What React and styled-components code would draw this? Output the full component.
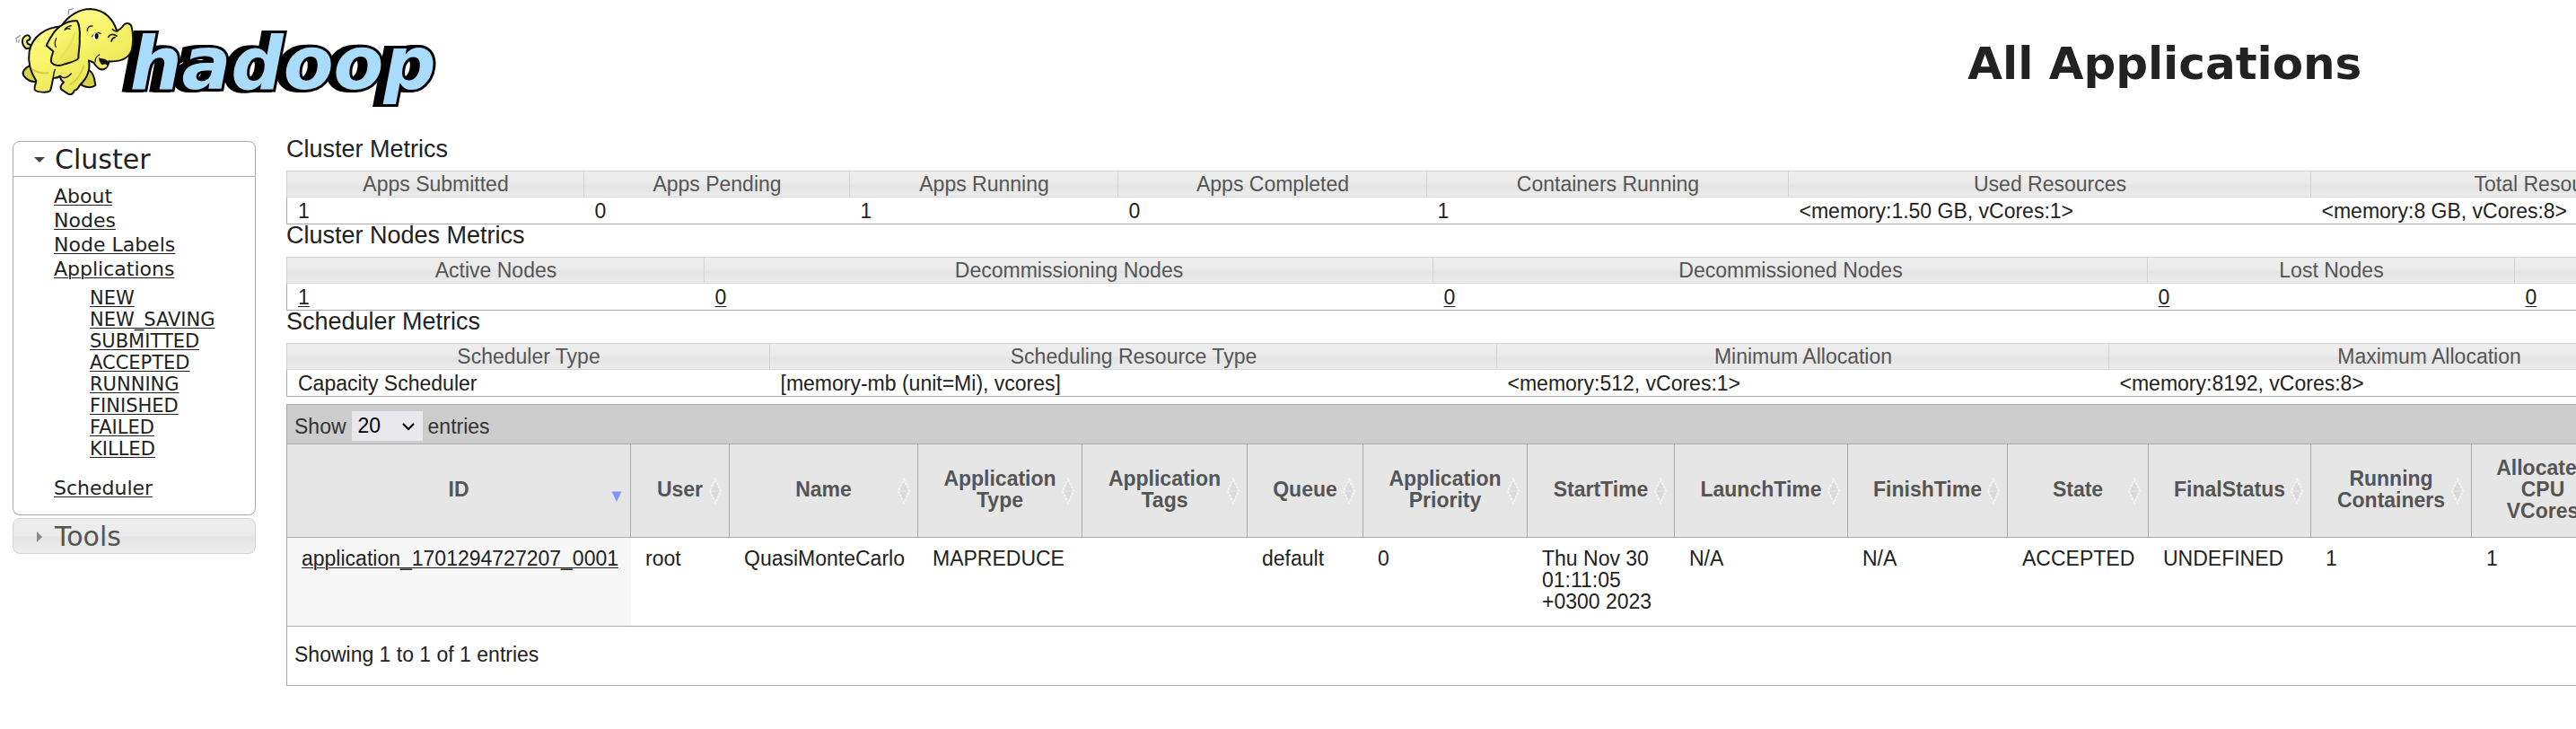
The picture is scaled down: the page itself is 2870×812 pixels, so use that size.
import React from "react";
import styled, { createGlobalStyle } from "styled-components";

const GlobalStyle = createGlobalStyle`
  *, *::before, *::after { box-sizing: border-box; }
  body {
    margin: 0;
    background: #fff;
    color: #222;
    font-family: "Liberation Sans", Arial, sans-serif;
    font-size: 23px;
    overflow-x: hidden;
  }
`;

const Page = styled.div`
  overflow: hidden;
`;

const Header = styled.header`
  display: flex;
  width: 151%;
  height: 154px;
`;

const Logo = styled.svg`
  flex: none;
  width: 490px;
  height: 120px;
`;

const Wordmark = styled.text`
  font: italic bold 244px "DejaVu Sans", sans-serif;
  fill: #a9dcfb;
  stroke: #000;
  stroke-width: 18px;
  stroke-linejoin: miter;
  paint-order: stroke;
  filter: drop-shadow(-12px 0 0 #000) drop-shadow(-12px 0 0 #000);
`;

const Title = styled.h1`
  flex: 1;
  margin: 42px 0 0;
  font: bold 50px/58px "DejaVu Sans", sans-serif;
  text-align: center;
`;

const Layout = styled.div`
  display: flex;
  align-items: flex-start;
  gap: 33px;
  padding-left: 14px;
`;

const Sidebar = styled.nav`
  flex: none;
  width: 271px;
  margin-right: 1px;
  padding-top: 3px;
  font-family: "DejaVu Sans", sans-serif;
`;

const SectionButton = styled.button`
  display: flex;
  align-items: center;
  gap: 10px;
  width: 100%;
  height: 40px;
  padding: 2px 0 0 22px;
  border: 1px solid ${(p) => (p.$open ? "#aaa" : "#d3d3d3")};
  border-radius: ${(p) => (p.$open ? "8px 8px 0 0" : "8px")};
  background: ${(p) =>
    p.$open ? "#fff" : "linear-gradient(#ededed, #ebebeb 50%, #e5e5e5 51%, #ececec)"};
  color: ${(p) => (p.$open ? "#222" : "#555")};
  font: 30px/36px "DejaVu Sans", sans-serif;
`;

const Arrow = styled.svg`
  flex: none;
  width: 14px;
  height: 14px;
`;

const Panel = styled.div`
  margin-bottom: 3px;
  padding: 8px 0 16px 45px;
  border: 1px solid #aaa;
  border-top: 0;
  border-radius: 0 0 8px 8px;
`;

const NavList = styled.ul`
  margin: 0;
  padding: 0;
  list-style: none;
  font-size: 22px;
  line-height: 27px;
`;

const SubList = styled.ul`
  margin: 0;
  padding: 7px 0 18px 40px;
  list-style: none;
  font-size: 21px;
  line-height: 24px;
`;

const TextLink = styled.a`
  color: #222;
  text-decoration: underline;
  text-decoration-thickness: 1px;
  text-underline-offset: 2px;
`;

const Main = styled.main`
  flex: 1;
  min-width: 0;
  overflow-x: clip;
`;

const Heading = styled.h2`
  margin: 0;
  padding-bottom: 11px;
  font-size: 27px;
  font-weight: normal;
  line-height: 25px;
`;

const Metrics = styled.table`
  width: ${(p) => p.$width}px;
  min-width: 100%;
  table-layout: fixed;
  border-collapse: collapse;
  border: 1px solid #aaa;
  th {
    height: 28px;
    padding: 1px 11px 0 12px;
    border: 1px solid #d3d3d3;
    background: linear-gradient(#ededed, #ebebeb 50%, #e4e4e4 51%, #ebebeb);
    color: #555;
    font-weight: normal;
    line-height: 27px;
  }
  td {
    height: 29px;
    padding: 1px 11px 0 12px;
    line-height: 28px;
  }
`;

const AppsPanel = styled.section`
  margin-top: 8px;
  border: solid #aaa;
  border-width: 1px 0 1px 1px;
`;

const Toolbar = styled.div`
  display: flex;
  align-items: center;
  height: 43px;
  padding: 0 8px;
  background: #ccc;
  color: #333;
`;

const LengthLabel = styled.label`
  display: flex;
  align-items: center;
  gap: 6px;
  padding-top: 6px;
`;

const SelectWrap = styled.span`
  display: grid;
  align-items: center;
  margin-bottom: 2px;
  > * { grid-area: 1 / 1; }
`;

const Select = styled.select`
  width: 79px;
  height: 33px;
  padding: 0 7px;
  border: 0;
  border-radius: 0;
  appearance: none;
  background: #e9e9ed;
  color: #000;
  font: 23px/33px "Liberation Sans", Arial, sans-serif;
`;

const Chevron = styled.svg`
  justify-self: end;
  width: 14px;
  height: 10px;
  margin-right: 9px;
  pointer-events: none;
`;

const Apps = styled.table`
  width: ${(p) => p.$width}px;
  min-width: 100%;
  table-layout: fixed;
  border-collapse: separate;
  border-spacing: 0;
  border: solid #aaa;
  border-width: 1px 0;
  line-height: 24px;
  th {
    padding: 0;
    border: solid #aaa;
    border-width: 0 1px 1px 0;
    background: #e6e6e6;
  }
  td {
    height: 98px;
    padding: 11px 8px 12px 16px;
    vertical-align: top;
  }
  td:first-child { background: #f7f7f7; }
`;

const SortButton = styled.button`
  display: grid;
  grid-template-columns: 16px 1fr 16px;
  align-items: center;
  width: 100%;
  height: 103px;
  padding: 0 7px;
  border: 0;
  background: none;
  color: #555;
  font: bold 23px/24px "Liberation Sans", Arial, sans-serif;
`;

const SortLabel = styled.span`
  grid-column: 2;
  padding-bottom: 4px;
`;

const SortIcon = styled.svg`
  width: 16px;
  height: 30px;
`;

const Info = styled.div`
  padding: 0 0 2px 8px;
  line-height: 63px;
`;

const sum = (cols) => cols.reduce((total, c) => total + c.width, 0);

const clusterMetrics = [
  { name: "Apps Submitted", value: "1", width: 331 },
  { name: "Apps Pending", value: "0", width: 296 },
  { name: "Apps Running", value: "1", width: 299 },
  { name: "Apps Completed", value: "0", width: 344 },
  { name: "Containers Running", value: "1", width: 403 },
  { name: "Used Resources", value: "<memory:1.50 GB, vCores:1>", width: 582 },
  { name: "Total Resources", value: "<memory:8 GB, vCores:8>", width: 528 },
];

const nodeMetrics = [
  { name: "Active Nodes", value: "1", width: 465, link: true },
  { name: "Decommissioning Nodes", value: "0", width: 812, link: true },
  { name: "Decommissioned Nodes", value: "0", width: 796, link: true },
  { name: "Lost Nodes", value: "0", width: 409, link: true },
  { name: "", value: "0", width: 500, link: true },
];

const schedulerMetrics = [
  { name: "Scheduler Type", value: "Capacity Scheduler", width: 538 },
  { name: "Scheduling Resource Type", value: "[memory-mb (unit=Mi), vcores]", width: 810 },
  { name: "Minimum Allocation", value: "<memory:512, vCores:1>", width: 682 },
  { name: "Maximum Allocation", value: "<memory:8192, vCores:8>", width: 713 },
];

const appColumns = [
  { name: "ID", value: "application_1701294727207_0001", width: 383, link: true, sorted: true },
  { name: "User", value: "root", width: 110 },
  { name: "Name", value: "QuasiMonteCarlo", width: 210 },
  { name: "Application Type", value: "MAPREDUCE", width: 183 },
  { name: "Application Tags", value: "", width: 184 },
  { name: "Queue", value: "default", width: 129 },
  { name: "Application Priority", value: "0", width: 183 },
  { name: "StartTime", value: "Thu Nov 30 01:11:05 +0300 2023", width: 164 },
  { name: "LaunchTime", value: "N/A", width: 193 },
  { name: "FinishTime", value: "N/A", width: 178 },
  { name: "State", value: "ACCEPTED", width: 157 },
  { name: "FinalStatus", value: "UNDEFINED", width: 181 },
  { name: "Running Containers", value: "1", width: 179 },
  { name: "Allocated CPU VCores", value: "1", width: 159 },
];

const appStates = [
  "NEW",
  "NEW_SAVING",
  "SUBMITTED",
  "ACCEPTED",
  "RUNNING",
  "FINISHED",
  "FAILED",
  "KILLED",
];

function HadoopLogo() {
  return (
    <Logo viewBox="0 0 1470 360" role="img" aria-label="hadoop">
      <defs>
        <linearGradient id="skin" x1="0" y1="0" x2="0.6" y2="1">
          <stop offset="0" stopColor="#fffb9a" />
          <stop offset="0.5" stopColor="#f9f56c" />
          <stop offset="1" stopColor="#e6e250" />
        </linearGradient>
      </defs>
      <Wordmark x="434" y="296">hadoop</Wordmark>
      <g fill="url(#skin)" stroke="#111" strokeWidth="6" strokeLinejoin="round" strokeLinecap="round">
        <path d="M104 160 L88 163 C70 148 70 124 90 118 C101 117 104 129 96 134 C87 134 87 146 102 150 Z" />
        <path d="M98 220 C82 228 72 240 79 253 C89 267 106 276 122 272 L130 240 Z" fill="#d6d245" />
        <path d="M292 232 C303 236 312 248 315 262 L319 285 C308 295 288 293 272 284 L276 250 Z" fill="#d6d245" />
        <path d="M98 172 C108 122 150 92 205 88 C225 55 262 30 303 30 C350 32 378 65 390 101 C400 103 408 91 414 83 C424 73 438 79 440 91 C446 112 446 146 440 168 C431 193 404 207 364 205 C362 225 348 236 335 231 C325 227 318 217 313 209 C306 207 302 204 297 202 C303 235 290 262 268 283 C262 290 260 301 249 302 C245 313 238 318 228 314 L205 299 C199 290 206 281 213 275 C204 269 201 262 202 254 C194 260 187 261 178 261 C174 275 173 290 168 303 C158 312 122 308 116 300 C113 290 121 279 121 270 C106 247 92 211 98 172 Z" />
        <path d="M178 258 C179 247 180 240 184 232 M202 254 C212 264 226 260 238 246" fill="none" strokeWidth="4" />
        <path d="M258 70 C223 67 191 91 178 112 C169 126 158 142 156 152 C165 160 171 166 178 172 C174 185 167 199 172 209 C181 220 199 222 216 214 C236 208 254 205 262 195 C262 171 268 150 266 130 C268 105 266 85 258 70 Z" />
      </g>
      <g fill="none" stroke="#222" strokeLinecap="round">
        <path d="M292 103 C291 92 298 86 309 87" strokeWidth="4" />
        <path d="M308 122 C316 111 325 105 336 112" strokeWidth="4" />
        <path d="M362 124 C368 114 378 112 390 120 M376 98 C381 103 387 106 393 104 M372 138 C374 130 378 126 384 125" strokeWidth="5" />
        <path d="M318 207 C318 195 323 187 332 183" strokeWidth="4" />
        <path d="M218 96 C226 87 232 87 238 86 M216 100 C222 96 228 93 234 97 M188 128 C182 142 182 150 187 157" strokeWidth="4" />
        <path d="M228 48 L230 33 L244 29 M56 140 L54 128 L68 118 M62 142 L64 134" stroke="#999" strokeWidth="4" />
        <path d="M110 232 C122 240 140 246 160 244 M280 220 C272 250 255 270 235 282" stroke="#d3cf45" strokeWidth="6" />
        <path d="M250 110 C240 145 225 170 200 196" stroke="#e6e25a" strokeWidth="7" />
      </g>
      <ellipse cx="321" cy="121" rx="10" ry="12" fill="#fff" transform="rotate(20 321 121)" />
      <ellipse cx="323" cy="121" rx="6" ry="10" fill="#111" />
      <path d="M330 193 C340 198 350 193 362 206 C362 216 354 222 346 219 C337 215 331 207 330 193 Z" fill="#111" />
      <path d="M340 220 C347 212 355 214 358 220 C354 228 345 229 340 220 Z" fill="#f2ee72" />
    </Logo>
  );
}

function CellText({ col }) {
  return col.link ? <TextLink href="#">{col.value}</TextLink> : col.value;
}

function Columns({ cols }) {
  return (
    <colgroup>
      {cols.map((c, i) => (
        <col key={i} width={c.width} />
      ))}
    </colgroup>
  );
}

function MetricsTable({ title, cols }) {
  return (
    <section>
      <Heading>{title}</Heading>
      <Metrics $width={sum(cols)} aria-label={title}>
        <Columns cols={cols} />
        <thead>
          <tr>
            {cols.map((c, i) => (
              <th key={i} scope="col">{c.name}</th>
            ))}
          </tr>
        </thead>
        <tbody>
          <tr>
            {cols.map((c, i) => (
              <td key={i}><CellText col={c} /></td>
            ))}
          </tr>
        </tbody>
      </Metrics>
    </section>
  );
}

function SortMark({ sorted }) {
  return (
    <SortIcon viewBox="0 0 16 30" aria-hidden="true">
      {sorted ? (
        <path d="M2 15 H14 L8 28 Z" fill="#8791fb" stroke="#dfe1f6" strokeWidth="1" />
      ) : (
        <>
          <path d="M8 2 L14 15 L8 28 L2 15 Z" fill="#dadada" stroke="#f4f4f4" strokeWidth="2" strokeDasharray="3 1" />
          <path d="M3 15 H13" stroke="#e8e8e8" strokeWidth="1" />
        </>
      )}
    </SortIcon>
  );
}

export default function App() {
  return (
    <Page>
      <GlobalStyle />
      <Header>
        <HadoopLogo />
        <Title>All Applications</Title>
      </Header>
      <Layout>
        <Sidebar>
          <SectionButton type="button" $open aria-expanded="true">
            <Arrow viewBox="0 0 14 14" aria-hidden="true">
              <path d="M1 4 H13 L7 10 Z" fill="#454545" />
            </Arrow>
            Cluster
          </SectionButton>
          <Panel>
            <NavList>
              <li><TextLink href="#">About</TextLink></li>
              <li><TextLink href="#">Nodes</TextLink></li>
              <li><TextLink href="#">Node Labels</TextLink></li>
              <li>
                <TextLink href="#">Applications</TextLink>
                <SubList>
                  {appStates.map((s) => (
                    <li key={s}><TextLink href="#">{s}</TextLink></li>
                  ))}
                </SubList>
              </li>
              <li><TextLink href="#">Scheduler</TextLink></li>
            </NavList>
          </Panel>
          <SectionButton type="button" aria-expanded="false">
            <Arrow viewBox="0 0 14 14" aria-hidden="true">
              <path d="M4 1 V13 L10 7 Z" fill="#888" />
            </Arrow>
            Tools
          </SectionButton>
        </Sidebar>
        <Main>
          <MetricsTable title="Cluster Metrics" cols={clusterMetrics} />
          <MetricsTable title="Cluster Nodes Metrics" cols={nodeMetrics} />
          <MetricsTable title="Scheduler Metrics" cols={schedulerMetrics} />
          <AppsPanel>
            <Toolbar>
              <LengthLabel>
                Show
                <SelectWrap>
                  <Select defaultValue="20">
                    <option>20</option>
                  </Select>
                  <Chevron viewBox="0 0 14 10" aria-hidden="true">
                    <path d="M1 2 L7 8 L13 2" fill="none" stroke="#000" strokeWidth="2" />
                  </Chevron>
                </SelectWrap>
                entries
              </LengthLabel>
            </Toolbar>
            <Apps $width={sum(appColumns)}>
              <Columns cols={appColumns} />
              <thead>
                <tr>
                  {appColumns.map((c) => (
                    <th key={c.name} scope="col" aria-sort={c.sorted ? "descending" : undefined}>
                      <SortButton type="button">
                        <SortLabel>{c.name}</SortLabel>
                        <SortMark sorted={c.sorted} />
                      </SortButton>
                    </th>
                  ))}
                </tr>
              </thead>
              <tbody>
                <tr>
                  {appColumns.map((c) => (
                    <td key={c.name}><CellText col={c} /></td>
                  ))}
                </tr>
              </tbody>
            </Apps>
            <Info>Showing 1 to 1 of 1 entries</Info>
          </AppsPanel>
        </Main>
      </Layout>
    </Page>
  );
}
